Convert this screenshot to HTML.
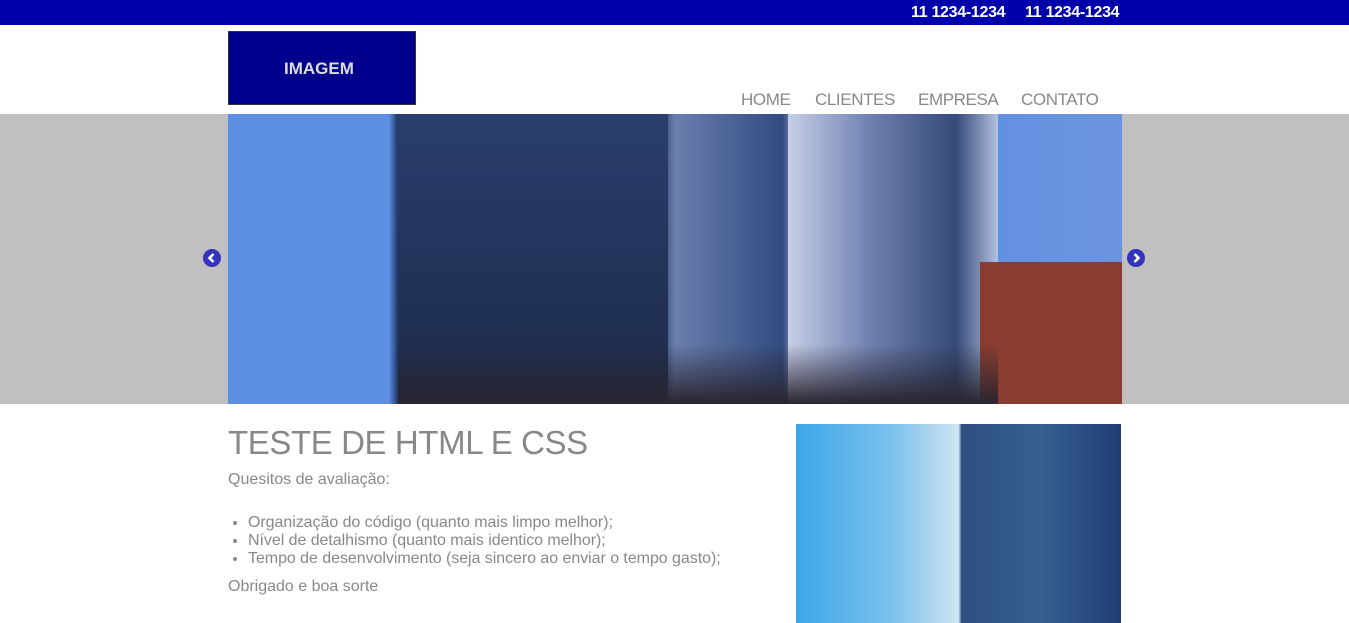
<!DOCTYPE html>
<html><head><meta charset="utf-8"><style>
*{margin:0;padding:0;box-sizing:border-box}
body{width:1349px;height:623px;overflow:hidden;background:#fff;font-family:"Liberation Sans",Arial,sans-serif;position:relative}
.top{position:absolute;left:0;top:0;width:1349px;height:25px;background:#0000aa}
.ph{position:absolute;top:4px;color:#fff;font-weight:bold;font-size:16px;letter-spacing:-0.3px}
.logo{position:absolute;left:228px;top:31px;width:188px;height:74px;background:#00008c;border:1px solid #333;color:#ddd;font-weight:bold;font-size:17px;line-height:74px;text-indent:55px}
.nav{position:absolute;top:90px;font-size:17px;color:#888;letter-spacing:-0.4px}
.band{position:absolute;left:0;top:114px;width:1349px;height:290px;background:#c0c0c0}
.ban{position:absolute;left:228px;top:114px;width:894px;height:290px;overflow:hidden;background:linear-gradient(90deg,#5d8fe3 0%,#5d8fe3 18%,#1f3565 19%,#22335a 48%,#6a7fae 50%,#314b80 62%,#aab5d8 64%,#8ea2cf 73%,#5d8fe3 77%,#6b94df 100%)}
.arr{position:absolute;top:249px;width:18px;height:18px}
h1{position:absolute;left:228px;top:424px;font-size:33px;font-weight:normal;color:#888;letter-spacing:-0.4px}
.t{position:absolute;left:228px;color:#888;font-size:16px}
ul{position:absolute;left:248px;top:514px;color:#888;font-size:16px;line-height:18px;letter-spacing:-0.05px}
.img2{position:absolute;left:796px;top:424px;width:325px;height:199px;background:linear-gradient(90deg,#3da6e8 0%,#7cc2ee 30%,#cfe4f0 50%,#2c4f7f 51%,#37608f 75%,#1f3d75 100%)}
</style></head><body>
<div class="top"></div>
<div class="ph" style="left:911px">11 1234-1234</div>
<div class="ph" style="left:1025px">11 1234-1234</div>
<div class="logo">IMAGEM</div>
<div class="nav" style="left:741px">HOME</div>
<div class="nav" style="left:815px">CLIENTES</div>
<div class="nav" style="left:918px">EMPRESA</div>
<div class="nav" style="left:1021px">CONTATO</div>
<div class="band"></div>
<div class="ban">
<div style="position:absolute;left:170px;top:0;width:270px;height:290px;background:linear-gradient(180deg,#2a3f6c,#1c2a4a)"></div>
<div style="position:absolute;left:560px;top:0;width:210px;height:290px;background:linear-gradient(90deg,#c7cfe8,#6d7fae 40%,#344a78 80%,#b4c0e0)"></div>
<div style="position:absolute;left:752px;top:148px;width:142px;height:142px;background:#8a3c30"></div>
<div style="position:absolute;left:170px;top:230px;width:600px;height:60px;background:linear-gradient(180deg,rgba(40,40,50,0),#2a2530)"></div>
</div>
<svg class="arr" style="left:203px" viewBox="0 0 18 18"><circle cx="9" cy="9" r="9" fill="#3333bb"/><path d="M10.5 5 L6.5 9 L10.5 13" stroke="#fff" stroke-width="2.6" fill="none"/></svg>
<svg class="arr" style="left:1127px" viewBox="0 0 18 18"><circle cx="9" cy="9" r="9" fill="#3333bb"/><path d="M7.5 5 L11.5 9 L7.5 13" stroke="#fff" stroke-width="2.6" fill="none"/></svg>
<h1>TESTE DE HTML E CSS</h1>
<div class="t" style="top:471px">Quesitos de avaliação:</div>
<ul><li>Organização do código (quanto mais limpo melhor);</li><li>Nível de detalhismo (quanto mais identico melhor);</li><li>Tempo de desenvolvimento (seja sincero ao enviar o tempo gasto);</li></ul>
<div class="t" style="top:578px">Obrigado e boa sorte</div>
<div class="img2"></div>
</body></html>
